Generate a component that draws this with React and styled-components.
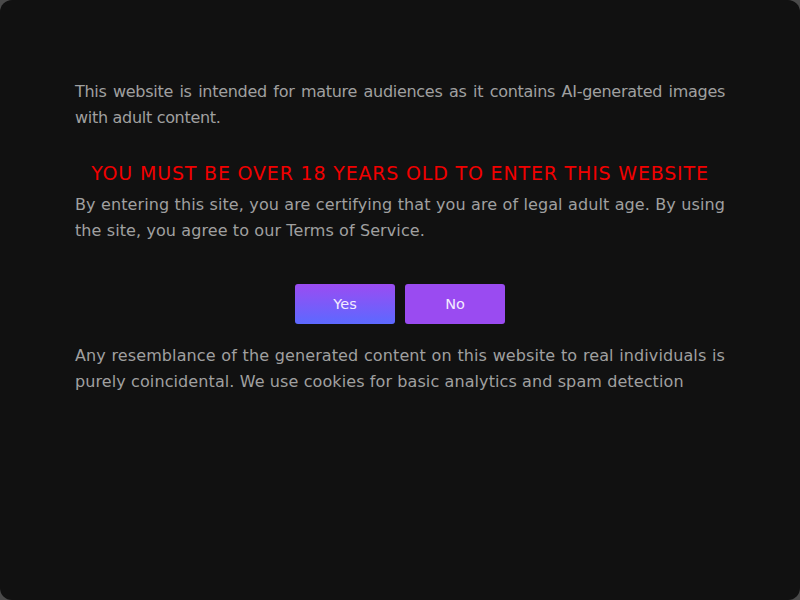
import React from 'react';
import styled, { createGlobalStyle } from 'styled-components';

const GlobalStyle = createGlobalStyle`
    html, body {
        margin: 0;
        padding: 0;
        background: #4a4a4a;
    }
    * {
        box-sizing: border-box;
    }
`;

const Modal = styled.div`
    width: 800px;
    height: 600px;
    background: #111111;
    border-radius: 12px;
    padding: 79px 75px 0 75px;
    display: flex;
    flex-direction: column;
    font-family: "DejaVu Sans", "Noto Sans", sans-serif;
`;

const Text = styled.p`
    margin: 0;
    color: #a0a0a0;
    font-size: 16px;
    line-height: 26px;
    letter-spacing: ${(p) => p.$spacing || 0}px;
    text-align: justify;
    margin-top: ${(p) => p.$top || 0}px;
`;

const Warning = styled.h2`
    margin: 29px 0 0 0;
    color: #f20000;
    font-size: 19px;
    font-weight: 400;
    line-height: 26px;
    text-align: center;
    letter-spacing: 0.82px;
`;

const BtnRow = styled.div`
    display: flex;
    justify-content: center;
    gap: 10px;
    margin-top: 40px;
`;

const Btn = styled.button`
    width: 100px;
    height: 40px;
    border: none;
    border-radius: 3px;
    color: #f4ecff;
    font-family: inherit;
    font-size: 14.5px;
    cursor: pointer;
    background: ${(p) => (p.$primary ? 'linear-gradient(180deg, #9b4cf2 0%, #5c69ff 100%)' : '#9a4bf1')};
`;

const App = () => {
    return <>
        <GlobalStyle />
        <Modal>
            <Text $spacing={-0.3}>This website is intended for mature audiences as it contains AI-generated images with adult content.</Text>
            <Warning>YOU MUST BE OVER 18 YEARS OLD TO ENTER THIS WEBSITE</Warning>
            <Text $top={6} $spacing={0.1}>By entering this site, you are certifying that you are of legal adult age. By using the site, you agree to our Terms of Service.</Text>
            <BtnRow>
                <Btn $primary>Yes</Btn>
                <Btn>No</Btn>
            </BtnRow>
            <Text $top={19} $spacing={0.1}>Any resemblance of the generated content on this website to real individuals is purely coincidental. We use cookies for basic analytics and spam detection</Text>
        </Modal>
    </>
}

export default App;
